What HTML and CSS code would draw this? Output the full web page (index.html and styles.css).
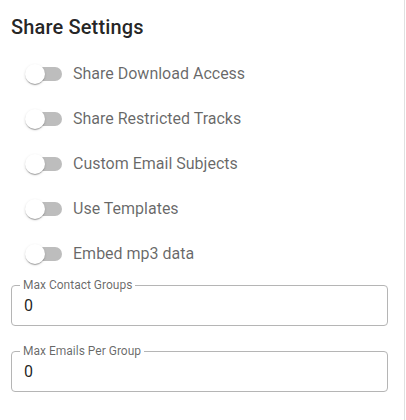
FILE: index.html
```html
<!DOCTYPE html>
<html>
<head>
<meta charset="utf-8">
<link rel="stylesheet" href="styles.css">
</head>
<body>
<div class="panel">
  <h2 class="title">Share Settings</h2>
  <div class="switches">
    <label class="row"><span class="switch"><span class="track"></span><span class="thumb"></span></span><span class="label">Share Download Access</span></label>
    <label class="row"><span class="switch"><span class="track"></span><span class="thumb"></span></span><span class="label">Share Restricted Tracks</span></label>
    <label class="row"><span class="switch"><span class="track"></span><span class="thumb"></span></span><span class="label">Custom Email Subjects</span></label>
    <label class="row"><span class="switch"><span class="track"></span><span class="thumb"></span></span><span class="label">Use Templates</span></label>
    <label class="row"><span class="switch"><span class="track"></span><span class="thumb"></span></span><span class="label">Embed mp3 data</span></label>
  </div>
  <fieldset class="field first">
    <legend class="legend">Max Contact Groups</legend>
    <input class="input" type="text" value="0">
  </fieldset>
  <fieldset class="field second">
    <legend class="legend">Max Emails Per Group</legend>
    <input class="input" type="text" value="0">
  </fieldset>
</div>
</body>
</html>
```
FILE: styles.css
```css
html, body {
  margin: 0;
  padding: 0;
  background: #fff;
}
body {
  font-family: Roboto, "Liberation Sans", sans-serif;
}
.panel {
  width: 405px;
  height: 420px;
  box-sizing: border-box;
  border-right: 1px solid #e0e0e0;
  padding: 11px 16px 0 11px;
}
.title {
  margin: 0;
  font-size: 20px;
  font-weight: 500;
  line-height: 32px;
  color: rgba(0, 0, 0, 0.87);
  letter-spacing: 0.15px;
}
.switches {
  display: flex;
  flex-direction: column;
  gap: 7px;
  margin-top: 12px;
  padding-left: 5px;
}
.row {
  display: flex;
  align-items: center;
  height: 38px;
}
.switch {
  position: relative;
  width: 58px;
  height: 38px;
  flex: none;
}
.track {
  position: absolute;
  left: 12px;
  top: 12px;
  width: 34px;
  height: 14px;
  border-radius: 7px;
  background: #bdbdbd;
}
.thumb {
  position: absolute;
  left: 9px;
  top: 9px;
  width: 20px;
  height: 20px;
  border-radius: 50%;
  background: #fff;
  box-shadow: 0 2px 1px -1px rgba(0,0,0,0.2), 0 1px 1px 0 rgba(0,0,0,0.14), 0 1px 3px 0 rgba(0,0,0,0.12);
}
.label {
  margin-left: -1px;
  font-size: 16px;
  line-height: 24px;
  color: rgba(0, 0, 0, 0.6);
}
.field {
  margin: 6px 0 0 0;
  padding: 0 11px 0 12px;
  border: 1px solid #b5b5b5;
  border-radius: 4px;
  height: 47px;
  box-sizing: border-box;
  min-width: 0;
}
.field.second {
  margin-top: 19px;
}
.legend {
  padding: 0 3px;
  margin-left: -4px;
  font-size: 12px;
  line-height: 12px;
  color: rgba(0, 0, 0, 0.6);
}
.input {
  display: block;
  border: none;
  outline: none;
  padding: 1px 0 0 0;
  margin: 0;
  width: 100%;
  font-family: Roboto, "Liberation Sans", sans-serif;
  font-size: 16px;
  line-height: 23px;
  height: 26px;
  color: rgba(0, 0, 0, 0.87);
  background: transparent;
}
```
